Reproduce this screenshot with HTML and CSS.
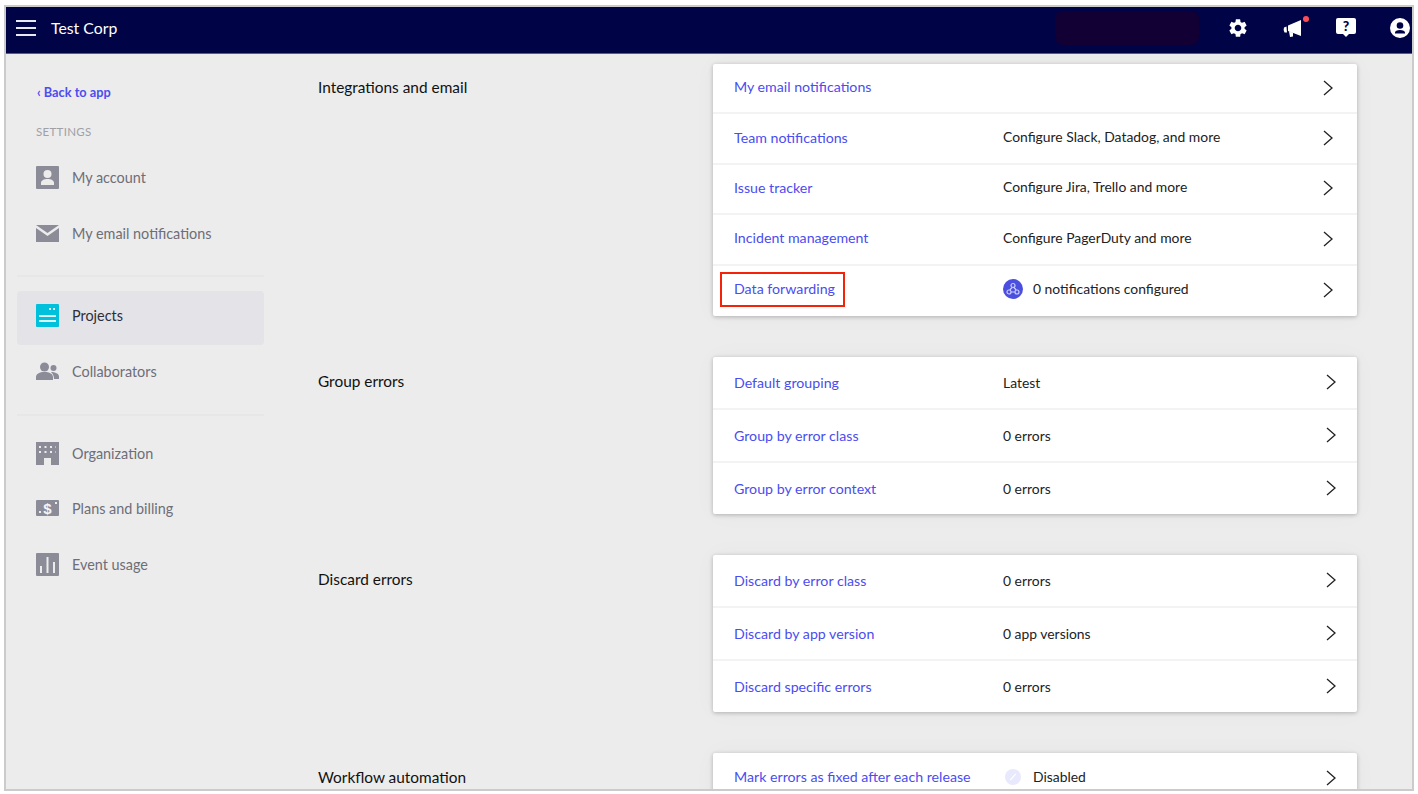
FILE: index.html
```html
<!DOCTYPE html>
<html lang="en">
<head>
    <meta charset="UTF-8">
    <meta name="viewport" content="width=device-width, initial-scale=1.0">
    <title>Project settings - Test Corp</title>
    <link rel="stylesheet" href="styles.css">
</head>
<body>
    <div class="frame">
        <header class="topbar">
            <div class="menu-icon"><span></span><span></span><span></span></div>
            <div class="org-name">Test Corp</div>
            <div class="redacted"></div>
            <svg class="top-icon gear" viewBox="0 0 24 24"><path fill="#fff" d="M19.14 12.94c.04-.3.06-.61.06-.94 0-.32-.02-.64-.07-.94l2.03-1.58a.49.49 0 0 0 .12-.61l-1.92-3.32a.488.488 0 0 0-.59-.22l-2.39.96c-.5-.38-1.03-.7-1.62-.94l-.36-2.54a.484.484 0 0 0-.48-.41h-3.84c-.24 0-.43.17-.47.41l-.36 2.54c-.59.24-1.13.57-1.62.94l-2.39-.96c-.22-.08-.47 0-.59.22L2.74 8.87c-.12.21-.08.47.12.61l2.03 1.58c-.05.3-.09.63-.09.94s.02.64.07.94l-2.03 1.58a.49.49 0 0 0-.12.61l1.92 3.32c.12.22.37.29.59.22l2.39-.96c.5.38 1.03.7 1.62.94l.36 2.54c.05.24.24.41.48.41h3.84c.24 0 .44-.17.47-.41l.36-2.54c.59-.24 1.13-.56 1.62-.94l2.39.96c.22.08.47 0 .59-.22l1.92-3.32c.12-.22.07-.47-.12-.61l-2.01-1.58zM12 15.6c-1.98 0-3.6-1.62-3.6-3.6s1.62-3.6 3.6-3.6 3.6 1.62 3.6 3.6-1.62 3.6-3.6 3.6z"/></svg>
            <div class="megaphone">
                <svg class="top-icon" viewBox="0 0 20 20"><path fill="#fff" d="M5 7.500 18 2v16L5 13zM3.500 8.500 4 14.500 1.500 14.500Q0 12 1 9.500zM6 13.500l4 1.500v3.500l-3 .5z"/></svg>
                <span class="dot"></span>
            </div>
            <div class="help">?</div>
            <svg class="top-icon user" viewBox="0 0 24 24"><path fill="#fff" fill-rule="evenodd" d="M12 0a12 12 0 1 1 0 24 12 12 0 0 1 0-24zm0 5a4 4 0 1 0 0 8 4 4 0 0 0 0-8zm0 9.500c-3.500 0-6 1.300-6 3v1h12v-1c0-1.700-2.500-3-6-3z"/></svg>
        </header>

        <div class="layout">
            <aside class="sidebar">
                <a class="back-link" href="#">&lsaquo; Back to app</a>
                <div class="side-title">SETTINGS</div>

                <a class="side-item" href="#">
                    <svg class="side-icon" viewBox="0 0 23 23"><rect width="23" height="23" rx="1" fill="#8b8c98"/><circle cx="11.500" cy="8" r="4" fill="#ececec"/><path fill="#ececec" d="M5 19v-2c0-2.500 3-4 6.500-4s6.500 1.500 6.500 4v2z"/></svg>
                    My account
                </a>
                <a class="side-item" href="#">
                    <svg class="side-icon" viewBox="0 0 23 23"><path fill="#8b8c98" d="M0 3h23L11.500 11zM0 6l11.500 8L23 6v14H0z"/></svg>
                    My email notifications
                </a>
                <div class="side-line"></div>

                <a class="side-item active" href="#">
                    <svg class="side-icon" viewBox="0 0 23 23"><rect width="23" height="23" rx="1" fill="#00c1dc"/><rect x="3" y="11" width="17" height="2" fill="#d8f5f9"/><rect x="3" y="16" width="17" height="2" fill="#d8f5f9"/><rect x="13" y="4" width="2" height="2" fill="#d8f5f9"/><rect x="17" y="4" width="2" height="2" fill="#d8f5f9"/></svg>
                    Projects
                </a>
                <a class="side-item" href="#">
                    <svg class="side-icon" viewBox="0 0 23 23"><circle cx="8.500" cy="7" r="4.500" fill="#8b8c98"/><circle cx="17.500" cy="8" r="3" fill="#8b8c98"/><path fill="#8b8c98" d="M0 20v-3c0-3 3.500-5 8.500-5s8.500 2 8.500 5v3zM15 12c4 0 8 1.500 8 4.500V19h-5c0-3-1-5-3-7z"/></svg>
                    Collaborators
                </a>
                <div class="side-line side-line-tight"></div>

                <a class="side-item" href="#">
                    <svg class="side-icon" viewBox="0 0 23 23"><path fill="#8b8c98" d="M0 0h23v23h-8v-7H8v7H0z"/><path stroke="#ececec" stroke-width="2" stroke-dasharray="2 3.500" d="M3 5h17M3 10h17"/></svg>
                    Organization
                </a>
                <a class="side-item" href="#">
                    <svg class="side-icon" viewBox="0 0 23 23"><rect y="3" width="23" height="16" rx="1" fill="#8b8c98"/><text x="11.500" y="16.500" text-anchor="middle" class="bill-sign">$</text><rect x="3" y="14" width="2" height="2" fill="#ececec"/><rect x="19" y="5" width="2" height="2" fill="#ececec"/></svg>
                    Plans and billing
                </a>
                <a class="side-item" href="#">
                    <svg class="side-icon" viewBox="0 0 23 23"><rect width="23" height="23" rx="1" fill="#8b8c98"/><rect x="4" y="13" width="2" height="7" fill="#ececec"/><rect x="10.500" y="4" width="2" height="16" fill="#ececec"/><rect x="17" y="9" width="2" height="11" fill="#ececec"/></svg>
                    Event usage
                </a>
            </aside>

            <main class="content">
                <section class="group group-first">
                    <h2>Integrations and email</h2>
                    <div class="card card-five">
                        <div class="row">
                            <a href="#">My email notifications</a>
                            <span class="value"></span>
                            <svg class="chevron" viewBox="0 0 10 16"><path d="M1 1l8 7-8 7"/></svg>
                        </div>
                        <div class="row">
                            <a href="#">Team notifications</a>
                            <span class="value">Configure Slack, Datadog, and more</span>
                            <svg class="chevron" viewBox="0 0 10 16"><path d="M1 1l8 7-8 7"/></svg>
                        </div>
                        <div class="row">
                            <a href="#">Issue tracker</a>
                            <span class="value">Configure Jira, Trello and more</span>
                            <svg class="chevron" viewBox="0 0 10 16"><path d="M1 1l8 7-8 7"/></svg>
                        </div>
                        <div class="row">
                            <a href="#">Incident management</a>
                            <span class="value">Configure PagerDuty and more</span>
                            <svg class="chevron" viewBox="0 0 10 16"><path d="M1 1l8 7-8 7"/></svg>
                        </div>
                        <div class="row">
                            <a class="marked" href="#">Data forwarding</a>
                            <span class="value">
                                <svg class="status-icon" viewBox="0 0 20 20"><circle cx="10" cy="10" r="10" fill="#4a4fe0"/><g fill="none" stroke="#c9cbfa" stroke-width="1.200"><circle cx="10" cy="6.500" r="2"/><circle cx="6" cy="13" r="2"/><circle cx="14" cy="13" r="2"/><path d="M9 8.500 6.800 11M11 8.500l2.200 2.500M8 13h4"/></g></svg>
                                0 notifications configured
                            </span>
                            <svg class="chevron" viewBox="0 0 10 16"><path d="M1 1l8 7-8 7"/></svg>
                        </div>
                    </div>
                </section>

                <section class="group">
                    <h2>Group errors</h2>
                    <div class="card">
                        <div class="row">
                            <a href="#">Default grouping</a>
                            <span class="value">Latest</span>
                            <svg class="chevron" viewBox="0 0 10 16"><path d="M1 1l8 7-8 7"/></svg>
                        </div>
                        <div class="row">
                            <a href="#">Group by error class</a>
                            <span class="value">0 errors</span>
                            <svg class="chevron" viewBox="0 0 10 16"><path d="M1 1l8 7-8 7"/></svg>
                        </div>
                        <div class="row">
                            <a href="#">Group by error context</a>
                            <span class="value">0 errors</span>
                            <svg class="chevron" viewBox="0 0 10 16"><path d="M1 1l8 7-8 7"/></svg>
                        </div>
                    </div>
                </section>

                <section class="group">
                    <h2>Discard errors</h2>
                    <div class="card">
                        <div class="row">
                            <a href="#">Discard by error class</a>
                            <span class="value">0 errors</span>
                            <svg class="chevron" viewBox="0 0 10 16"><path d="M1 1l8 7-8 7"/></svg>
                        </div>
                        <div class="row">
                            <a href="#">Discard by app version</a>
                            <span class="value">0 app versions</span>
                            <svg class="chevron" viewBox="0 0 10 16"><path d="M1 1l8 7-8 7"/></svg>
                        </div>
                        <div class="row">
                            <a href="#">Discard specific errors</a>
                            <span class="value">0 errors</span>
                            <svg class="chevron" viewBox="0 0 10 16"><path d="M1 1l8 7-8 7"/></svg>
                        </div>
                    </div>
                </section>

                <section class="group">
                    <h2>Workflow automation</h2>
                    <div class="card card-cut">
                        <div class="row">
                            <a href="#">Mark errors as fixed after each release</a>
                            <span class="value">
                                <svg class="status-icon status-small" viewBox="0 0 20 20"><circle cx="10" cy="10" r="10" fill="#e8e9fd"/><path stroke="#fff" stroke-width="1.500" d="M6.500 14 13.500 6"/></svg>
                                Disabled
                            </span>
                            <svg class="chevron" viewBox="0 0 10 16"><path d="M1 1l8 7-8 7"/></svg>
                        </div>
                    </div>
                </section>
            </main>
        </div>
    </div>
</body>
</html>
```

FILE: styles.css
```css
html, body {
    margin: 0;
    background-color: #fff;
}
body {
    padding: 5px 4px 3px 4px;
    font-family: Lato, Arial, sans-serif;
    font-size: 14.2px;
    color: #222;
}
a {
    text-decoration: none;
}
.frame {
    height: 782px;
    border: 2px solid #cbcbcb;
    background-color: #ececec;
    overflow: hidden;
}

/* top bar */
.topbar {
    display: flex;
    align-items: center;
    box-sizing: border-box;
    height: 47px;
    padding-left: 10px;
    padding-bottom: 5px;
    background-color: #000345;
    border-bottom: 1px solid #5a5c80;
    color: #fff;
}
.menu-icon {
    display: flex;
    flex-direction: column;
    gap: 5px;
    width: 20px;
    margin-right: 15px;
}
.menu-icon span {
    height: 2px;
    background-color: #e8e8f0;
}
.org-name {
    font-size: 15.8px;
}
.redacted {
    width: 144px;
    height: 34px;
    margin-left: auto;
    margin-right: 28px;
    border-radius: 8px;
    background-color: #120035;
}
.top-icon {
    display: block;
    width: 20px;
    height: 20px;
}
.gear {
    width: 22px;
    height: 22px;
}
.megaphone {
    position: relative;
    margin-left: 34px;
}
.dot {
    position: absolute;
    top: -2px;
    right: -6px;
    width: 6px;
    height: 6px;
    border-radius: 50%;
    background-color: #ff4d55;
}
.help {
    position: relative;
    width: 20px;
    height: 16px;
    margin-left: 33px;
    margin-bottom: 4px;
    border-radius: 2px;
    background-color: #fff;
    color: #000345;
    font-size: 14px;
    font-weight: 900;
    line-height: 16px;
    text-align: center;
}
.help::after {
    content: "";
    position: absolute;
    left: 7px;
    bottom: -3px;
    border-left: 3px solid transparent;
    border-right: 3px solid transparent;
    border-top: 3px solid #fff;
}
.user {
    margin-left: 34px;
    margin-right: 2px;
}

/* layout */
.layout {
    display: flex;
}
.sidebar {
    flex: none;
    width: 247px;
    margin-left: 11px;
    margin-right: 54px;
}
.back-link {
    display: block;
    margin-top: 30px;
    margin-left: 20px;
    color: #4a4df0;
    font-size: 12.75px;
    font-weight: 700;
    line-height: 16px;
}
.side-title {
    margin-top: 24px;
    margin-left: 19px;
    margin-bottom: 10px;
    color: #a0a0a6;
    font-size: 11.5px;
    letter-spacing: 0.3px;
    line-height: 16px;
}
.side-item {
    display: flex;
    align-items: center;
    gap: 13px;
    height: 55.500px;
    padding-left: 19px;
    border-radius: 4px;
    color: #6e6e78;
    font-size: 14.4px;
}
.side-item.active {
    box-sizing: border-box;
    height: 54px;
    margin-bottom: -1px;
    padding-bottom: 5px;
    background-color: #e3e3e8;
    color: #2e2e3a;
}
.side-icon {
    flex: none;
    width: 23px;
    height: 23px;
}
.bill-sign {
    fill: #f4f4f4;
    font-family: "Liberation Sans", sans-serif;
    font-size: 15px;
    font-weight: 700;
}
.side-line {
    height: 2px;
    margin: 14px 0;
    background-color: #e7e7e7;
}
.side-line-tight {
    margin-bottom: 10px;
}

/* settings rows */
.content {
    flex: none;
    width: 1039px;
    padding-top: 10px;
    display: flex;
    flex-direction: column;
    gap: 41px;
}
.group {
    display: grid;
    grid-template-columns: 395px 644px;
}
.group h2 {
    margin: 0;
    padding-top: 14px;
    color: #111;
    font-size: 15.4px;
    font-weight: 400;
    line-height: 20px;
}
.group-first h2 {
    padding-top: 13px;
}
.card {
    border-radius: 2px;
    background-color: #fff;
    box-shadow: 0 1px 4px rgba(0, 0, 0, 0.25), 0 0 24px rgba(0, 0, 0, 0.03);
}
.row {
    display: grid;
    grid-template-columns: 269px 1fr 10px;
    align-items: center;
    height: 53px;
    padding-left: 21px;
    padding-right: 21px;
    box-sizing: border-box;
    border-bottom: 2px solid #f3f3f3;
}
.row:last-child {
    height: 51px;
    border-bottom: none;
}
.card-five .row {
    height: 50.400px;
    padding-right: 24px;
}
.card-five .row a,
.card-cut .row a,
.card-cut .value {
    padding-bottom: 3px;
}
.card-five .value {
    padding-bottom: 4px;
}
.card-five .chevron {
    margin-bottom: 1px;
}
.row a {
    justify-self: start;
    color: #4a4df0;
}
.value {
    display: flex;
    align-items: center;
    gap: 10px;
    color: #222;
    font-size: 13.9px;
}
.status-icon {
    flex: none;
    width: 20px;
    height: 20px;
}
.status-small {
    width: 16px;
    height: 16px;
    margin-left: 2px;
    margin-right: 2px;
}
.chevron {
    display: block;
    width: 10px;
    height: 16px;
    fill: none;
    stroke: #222;
    stroke-width: 1.300;
}
.card-five .row a.marked {
    padding: 6px 8px 8px 12px;
    margin-left: -12px;
    margin-bottom: 2px;
    outline: 2px solid #f5220a;
}
```
